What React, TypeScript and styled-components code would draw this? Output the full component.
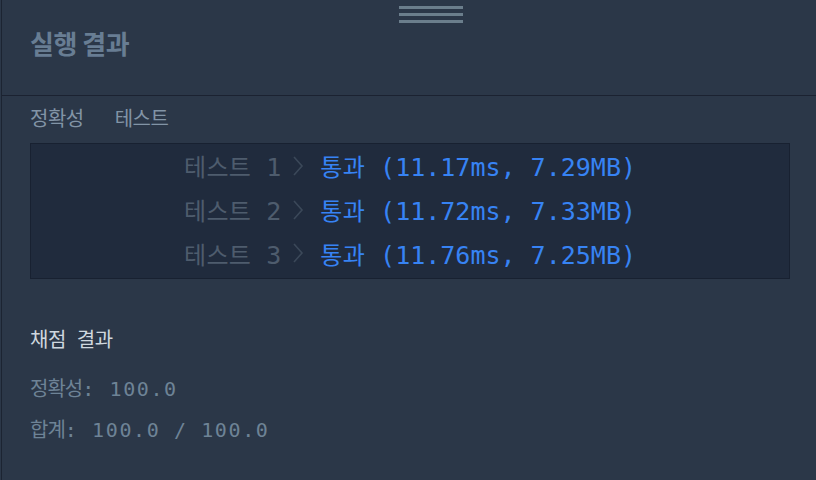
import React from "react";
import styled, { createGlobalStyle } from "styled-components";

const Global = createGlobalStyle`
  html, body { margin: 0; padding: 0; background: #2b3748; }
  body { width: 816px; height: 480px; overflow: hidden; }
  * { box-sizing: border-box; }
`;

const KR = `"Noto Sans CJK KR", "Noto Sans", sans-serif`;
const MONO = `"DejaVu Sans Mono", "Noto Sans CJK KR", monospace`;

const Frame = styled.div`
  height: 480px;
  padding-left: 1px;
  background: #2b3748;
`;

const Panel = styled.div`
  height: 100%;
  border-left: 1px solid #1c2432;
  display: flex;
  flex-direction: column;
`;

const Header = styled.div`
  height: 96px;
  display: flex;
  flex-direction: column;
  padding: 6px 0 0 28px;
  border-bottom: 1px solid #1b2231;
`;

const Handle = styled.div`
  margin-left: 369px;
  width: 64px;
  display: flex;
  flex-direction: column;
  gap: 4px;
`;

const HandleLine = styled.span`
  display: block;
  height: 3px;
  background: #6b7e8c;
`;

const Title = styled.h1`
  margin: 3px 0 0;
  font-family: ${KR};
  font-weight: 700;
  font-size: 26px;
  letter-spacing: -0.5px;
  line-height: 34px;
  color: #687d93;
`;

const Body = styled.div`
  padding: 0 26px 0 28px;
  display: flex;
  flex-direction: column;
`;

const Tabs = styled.div`
  display: flex;
  gap: 31px;
  height: 47px;
  padding-bottom: 4px;
  align-items: center;
`;

const Tab = styled.span`
  font-family: ${KR};
  font-size: 20px;
  letter-spacing: -0.5px;
  color: #8294a6;
`;

const ResultBox = styled.div`
  background: #202b3d;
  border: 1px solid #182131;
  height: 136px;
  padding-bottom: 3px;
  display: flex;
  flex-direction: column;
  justify-content: center;
`;

const Row = styled.div`
  height: 46px;
  display: flex;
  align-items: center;
  justify-content: center;
  font-family: ${MONO};
  font-size: 25px;
  white-space: pre;
`;

const Label = styled.span`
  color: #4e5c6d;
`;

const Hangul = styled.span`
  font-family: ${KR};
  font-size: 24px;
  letter-spacing: 0.3px;
`;

const Chevron = styled.svg`
  width: 15px;
  height: 24px;
  margin: 0 14px 0 10px;
  flex: none;
`;

const Pass = styled.span`
  color: #3783f4;
`;

const Summary = styled.div`
  padding-top: 42px;
  display: flex;
  flex-direction: column;
`;

const SummaryTitle = styled.div`
  font-family: ${KR};
  font-size: 20px;
  word-spacing: 7px;
  letter-spacing: -0.5px;
  color: #cfd7df;
  line-height: 36px;
  margin-bottom: 11px;
`;

const Stat = styled.div`
  font-family: ${MONO};
  font-size: 20px;
  letter-spacing: 1.6px;
  color: #6e8396;
  line-height: 39px;
  white-space: pre;
`;

const StatKr = styled.span`
  font-family: ${KR};
  font-size: 20px;
  letter-spacing: -1px;
`;

const rows = [
  { n: 1, r: "(11.17ms, 7.29MB)" },
  { n: 2, r: "(11.72ms, 7.33MB)" },
  { n: 3, r: "(11.76ms, 7.25MB)" },
];

export default function App() {
  return (
    <>
      <Global />
      <Frame>
        <Panel>
          <Header>
            <Handle>
              <HandleLine />
              <HandleLine />
              <HandleLine />
            </Handle>
            <Title>실행 결과</Title>
          </Header>
          <Body>
            <Tabs>
              <Tab>정확성</Tab>
              <Tab>테스트</Tab>
            </Tabs>
            <ResultBox>
              {rows.map((row) => (
                <Row key={row.n}>
                  <Label>
                    <Hangul>테스트</Hangul> {row.n}
                  </Label>
                  <Chevron viewBox="0 0 15 24">
                    <path d="M3 3 L11 12 L3 21" fill="none" stroke="#3b4859" strokeWidth="1.6" />
                  </Chevron>
                  <Pass>
                    <Hangul>통과</Hangul> {row.r}
                  </Pass>
                </Row>
              ))}
            </ResultBox>
            <Summary>
              <SummaryTitle>채점 결과</SummaryTitle>
              <Stat>
                <StatKr>정확성</StatKr>: 100.0
              </Stat>
              <Stat>
                <StatKr>합계</StatKr>: 100.0 / 100.0
              </Stat>
            </Summary>
          </Body>
        </Panel>
      </Frame>
    </>
  );
}
